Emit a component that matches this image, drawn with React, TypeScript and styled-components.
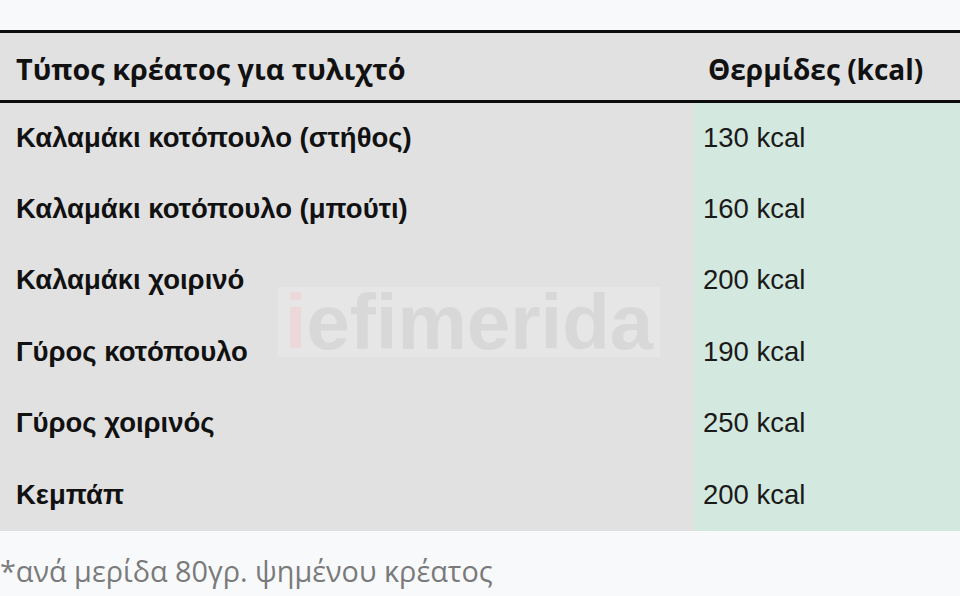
import React from "react";
import styled, { createGlobalStyle } from "styled-components";

const Global = createGlobalStyle`
  html, body { margin: 0; padding: 0; background: #f8f9fb; }
  body { width: 960px; height: 596px; overflow: hidden; }
`;

const Page = styled.div`
  width: 960px;
  height: 596px;
  padding-top: 30px;
  box-sizing: border-box;
  background: #f8f9fb;
  position: relative;
`;

const Table = styled.table`
  width: 960px;
  border-collapse: collapse;
  table-layout: fixed;
`;

const HeadRow = styled.tr`
  background: #e1e1e1;
  border-top: 3px solid #0c0c0c;
  border-bottom: 3px solid #0c0c0c;
  height: 70px;
`;

const HeadCell = styled.th<{ $pad: number; $size: number }>`
  text-align: left;
  padding: 4px 0 0 ${(p) => p.$pad}px;
  font-family: "Open Sans", "Noto Sans", sans-serif;
  font-weight: 700;
  font-size: ${(p) => p.$size}px;
  color: #111;
  white-space: nowrap;
`;

const Row = styled.tr`
  height: 71.5px;
`;

const NameCell = styled.td`
  background: #e1e1e1;
  padding: 0 0 0 16px;
  font-family: "Liberation Sans", Arial, sans-serif;
  font-weight: 700;
  font-size: 27.5px;
  color: #111;
  white-space: nowrap;
`;

const KcalCell = styled.td`
  background: #d3e8de;
  padding: 0 0 0 9px;
  font-family: "Liberation Sans", Arial, sans-serif;
  font-size: 27.5px;
  color: #1a1a1a;
`;

const Note = styled.div`
  padding: 20px 0 0 0;
  font-family: "Open Sans", "Noto Sans", sans-serif;
  font-weight: 400;
  font-size: 28.8px;
  color: #7a7a7a;
  white-space: nowrap;
`;

const Watermark = styled.div`
  position: absolute;
  left: 278px;
  top: 287px;
  width: 382px;
  height: 70px;
  background: rgba(235, 235, 235, 0.55);
  display: flex;
  align-items: center;
  justify-content: center;
  font-family: "Liberation Sans", Arial, sans-serif;
  font-weight: 700;
  font-size: 78px;
  color: #d8d8d8;
  line-height: 70px;
`;

const WmI = styled.span`
  color: #ecd8d8;
`;

const rows: [string, string][] = [
  ["Καλαμάκι κοτόπουλο (στήθος)", "130 kcal"],
  ["Καλαμάκι κοτόπουλο (μπούτι)", "160 kcal"],
  ["Καλαμάκι χοιρινό", "200 kcal"],
  ["Γύρος κοτόπουλο", "190 kcal"],
  ["Γύρος χοιρινός", "250 kcal"],
  ["Κεμπάπ", "200 kcal"],
];

export default function App() {
  return (
    <Page>
      <Global />
      <Table>
        <colgroup>
          <col style={{ width: 694 }} />
          <col style={{ width: 266 }} />
        </colgroup>
        <thead>
          <HeadRow>
            <HeadCell $pad={16} $size={28.8}>Τύπος κρέατος για τυλιχτό</HeadCell>
            <HeadCell $pad={14} $size={28}>Θερμίδες (kcal)</HeadCell>
          </HeadRow>
        </thead>
        <tbody>
          {rows.map(([n, k]) => (
            <Row key={n}>
              <NameCell>{n}</NameCell>
              <KcalCell>{k}</KcalCell>
            </Row>
          ))}
        </tbody>
      </Table>
      <Note>*ανά μερίδα 80γρ. ψημένου κρέατος</Note>
      <Watermark>
        <WmI>i</WmI>efimerida
      </Watermark>
    </Page>
  );
}
